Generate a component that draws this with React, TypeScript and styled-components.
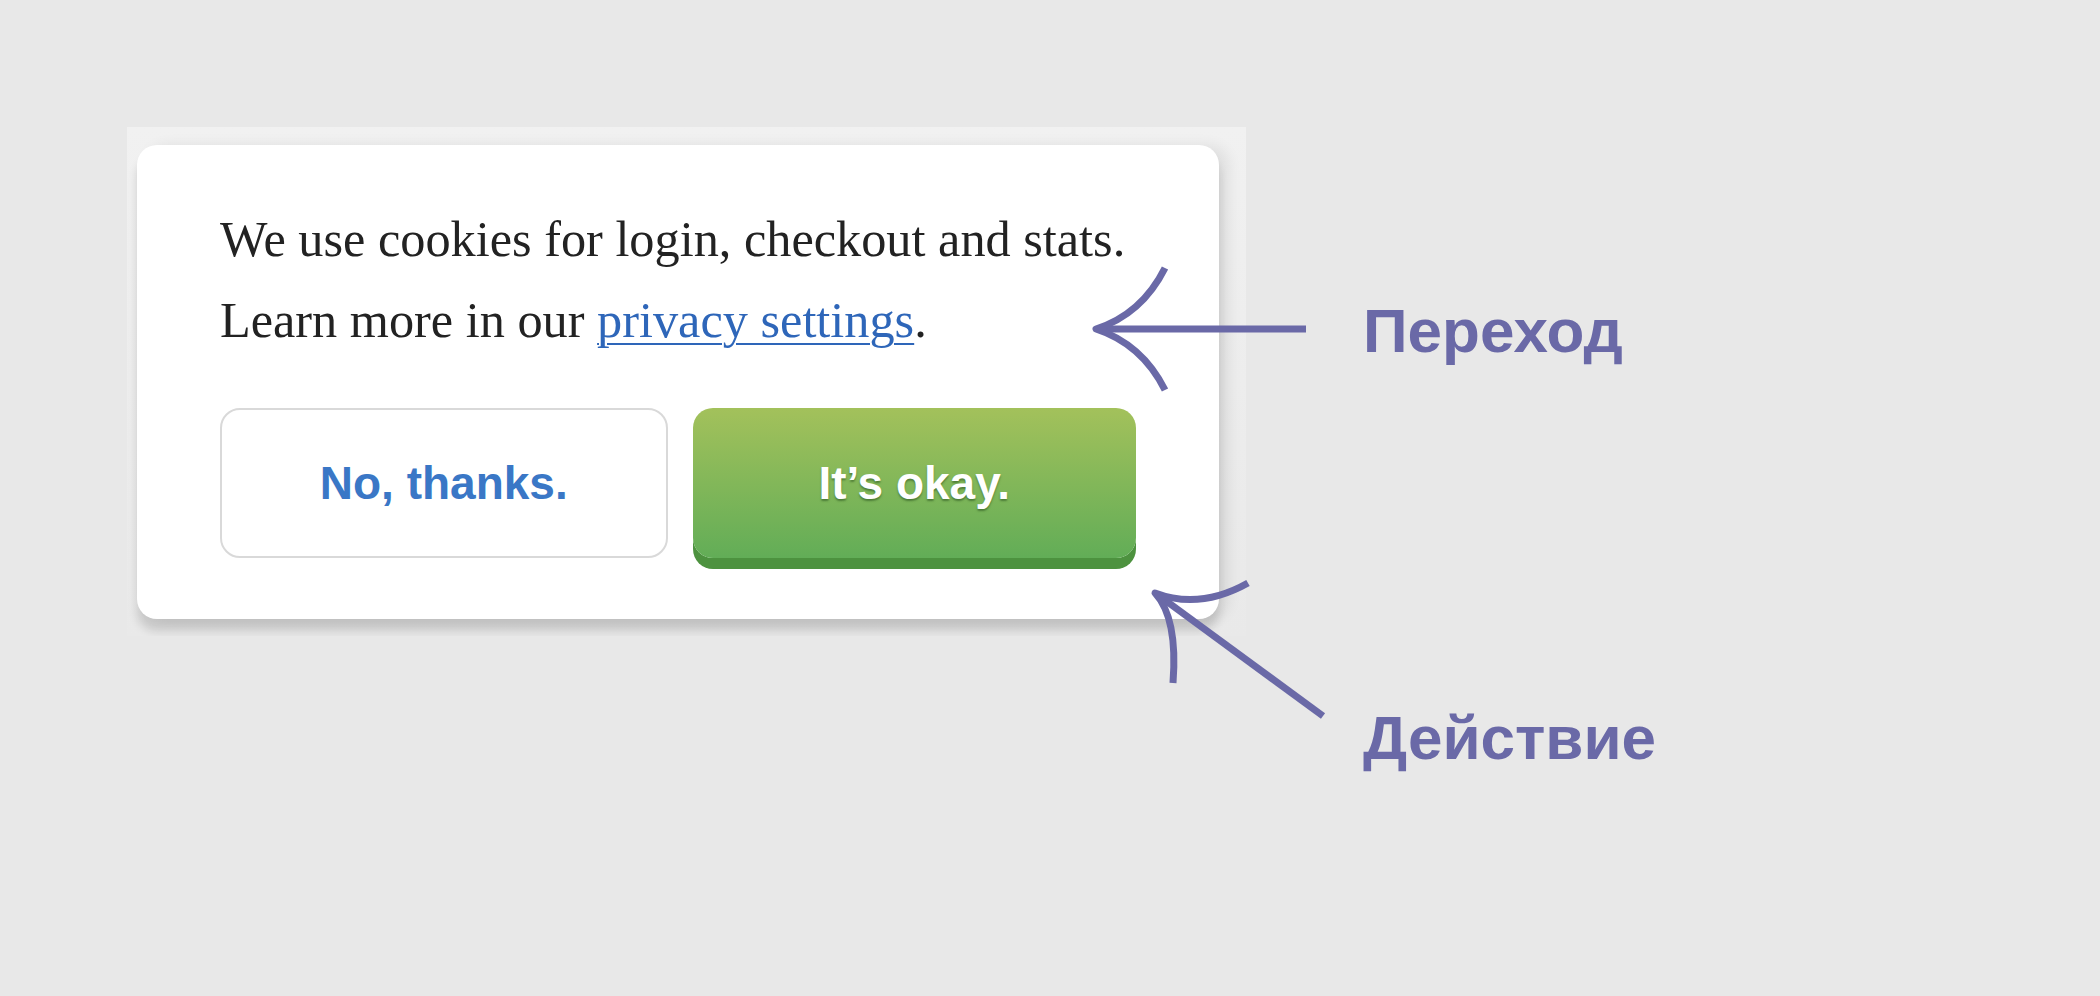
import React from "react";
import styled, { createGlobalStyle } from "styled-components";

const GlobalStyle = createGlobalStyle`
  html, body {
    margin: 0;
    padding: 0;
    background: #e8e8e8;
  }
  body {
    width: 2100px;
    height: 996px;
    overflow: hidden;
  }
`;

const ACCENT = "#6a69a7";

const Stage = styled.div`
  position: relative;
  box-sizing: border-box;
  display: flex;
  align-items: flex-start;
  width: 2100px;
  height: 996px;
  padding: 127px 0 0 127px;
`;

const Backdrop = styled.div`
  box-sizing: border-box;
  width: 1119px;
  height: 509px;
  padding: 18px 27px 17px 10px;
  background: linear-gradient(to bottom, #f1f1f1, #e9e9e9);
  overflow: hidden;
`;

const Card = styled.div`
  box-sizing: border-box;
  height: 474px;
  padding: 54px 83px 0;
  background: #ffffff;
  border-radius: 20px;
  box-shadow: 0 12px 10px rgba(0, 0, 0, 0.14), 10px 0 14px rgba(0, 0, 0, 0.07);
`;

const Line = styled.p`
  margin: 0;
  font-family: "Liberation Serif", "Times New Roman", serif;
  font-size: 50.3px;
  line-height: 81px;
  color: #222222;
  white-space: nowrap;
`;

const PrivacyLink = styled.a`
  color: #2e66b9;
  text-decoration: underline;
  text-decoration-thickness: 2px;
  text-underline-offset: 6px;
`;

const ButtonRow = styled.div`
  display: flex;
  gap: 25px;
  margin-top: 47px;
`;

const Button = styled.button<{ $primary?: boolean }>`
  box-sizing: border-box;
  flex: 1;
  height: 150px;
  border-radius: 20px;
  font-family: "Liberation Sans", Arial, sans-serif;
  font-weight: 700;
  font-size: 46px;
  cursor: pointer;
  border: ${({ $primary }) => ($primary ? "none" : "2px solid #d9d9d9")};
  background: ${({ $primary }) =>
    $primary ? "linear-gradient(to bottom, #a3c15b, #62ad57)" : "#ffffff"};
  color: ${({ $primary }) => ($primary ? "#ffffff" : "#3a77c6")};
  box-shadow: ${({ $primary }) => ($primary ? "0 11px 0 #4d923f" : "none")};
  text-shadow: ${({ $primary }) =>
    $primary ? "0 2px 2px rgba(40, 80, 30, 0.55)" : "none"};
`;

const Labels = styled.div`
  display: flex;
  flex-direction: column;
  gap: 345px;
  margin-left: 117px;
  padding-top: 173px;
`;

const Label = styled.div`
  font-family: "Liberation Sans", Arial, sans-serif;
  font-weight: 700;
  font-size: 62px;
  line-height: 62px;
  color: ${ACCENT};
`;

const Annotations = styled.svg`
  position: absolute;
  top: 0;
  left: 0;
  pointer-events: none;
`;

export default function App() {
  return (
    <>
      <GlobalStyle />
      <Stage>
        <Backdrop>
          <Card>
            <Line>We use cookies for login, checkout and stats.</Line>
            <Line>
              Learn more in our <PrivacyLink href="#">privacy settings</PrivacyLink>.
            </Line>
            <ButtonRow>
              <Button>No, thanks.</Button>
              <Button $primary>It’s okay.</Button>
            </ButtonRow>
          </Card>
        </Backdrop>
        <Labels>
          <Label>Переход</Label>
          <Label>Действие</Label>
        </Labels>
        <Annotations width="2100" height="996" viewBox="0 0 2100 996" fill="none">
          <g stroke={ACCENT} strokeWidth="7" strokeLinejoin="round">
            <path d="M1306 329 H1098" />
            <path d="M1165 268 Q1142 314 1096 329 Q1142 344 1165 390" />
            <path d="M1323 716 L1158 595" />
            <path d="M1248 583 Q1200 610 1155 593 Q1178 618 1173 683" />
          </g>
        </Annotations>
      </Stage>
    </>
  );
}
